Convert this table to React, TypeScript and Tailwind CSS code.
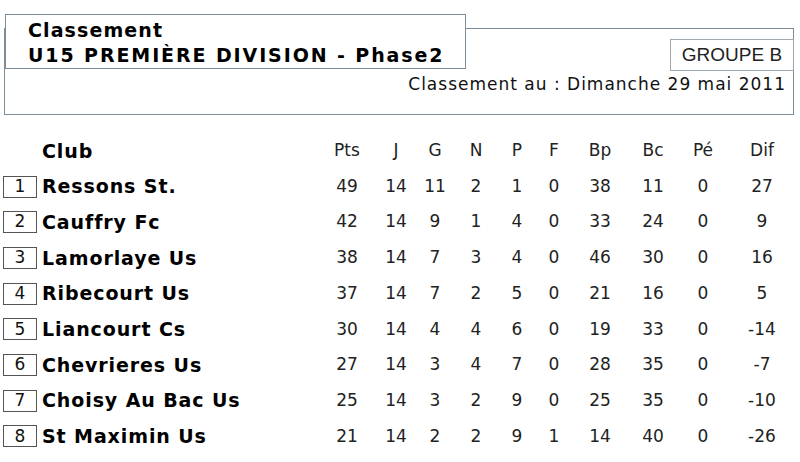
import React from "react";

const rows: [number, string, (string | number)[]][] = [
  [1, "Ressons St.", [49, 14, 11, 2, 1, 0, 38, 11, 0, 27]],
  [2, "Cauffry Fc", [42, 14, 9, 1, 4, 0, 33, 24, 0, 9]],
  [3, "Lamorlaye Us", [38, 14, 7, 3, 4, 0, 46, 30, 0, 16]],
  [4, "Ribecourt Us", [37, 14, 7, 2, 5, 0, 21, 16, 0, 5]],
  [5, "Liancourt Cs", [30, 14, 4, 4, 6, 0, 19, 33, 0, -14]],
  [6, "Chevrieres Us", [27, 14, 3, 4, 7, 0, 28, 35, 0, -7]],
  [7, "Choisy Au Bac Us", [25, 14, 3, 2, 9, 0, 25, 35, 0, -10]],
  [8, "St Maximin Us", [21, 14, 2, 2, 9, 1, 14, 40, 0, -26]],
];

const heads = ["Pts", "J", "G", "N", "P", "F", "Bp", "Bc", "Pé", "Dif"];

const grid =
  "grid grid-cols-[322px_50px_48px_30px_52px_30px_44px_48px_58px_42px_76px] h-[35.7px] items-center";

export default function App() {
  return (
    <div
      className="w-[800px] h-[462px] bg-white text-black overflow-hidden"
      style={{ fontFamily: '"DejaVu Sans", Verdana, sans-serif' }}
    >
      <div className="pt-[28px] pl-[4px] pr-[6px]">
        <div className="relative h-[87px] border border-[#7d8c99]">
          <div className="absolute left-[0px] top-[-15px] w-[461px] h-[55px] bg-white border border-[#7d8c99] pl-[22px] pt-[3px]">
            <div className="text-[19px] font-bold leading-[25px] tracking-[1.1px]">Classement</div>
            <div className="text-[19px] font-bold leading-[25px] tracking-[1.9px] whitespace-nowrap">
              U15 PREMIÈRE DIVISION - Phase2
            </div>
          </div>
          <div className="flex flex-col items-end pt-[10px]">
            <div
              className="w-[124px] h-[32px] border border-[#a0a8b0] flex items-center justify-center text-[19px] text-[#222] mr-[-1px]"
              style={{ fontFamily: '"Liberation Sans", Arial, sans-serif' }}
            >
              GROUPE B
            </div>
            <div className="text-[17px] leading-[26px] tracking-[1px] text-[#111] mr-[7px]">
              Classement au : Dimanche 29 mai 2011
            </div>
          </div>
        </div>
      </div>

      <div className="mt-[18px]">
        <div className={grid}>
          <div className="pl-[42px] text-[19px] font-bold tracking-[0.9px]">Club</div>
          {heads.map((h) => (
            <div key={h} className="text-center text-[17px] text-[#222]">
              {h}
            </div>
          ))}
        </div>
        {rows.map(([rank, name, vals]) => (
          <div key={rank} className={grid}>
            <div className="flex items-center">
              <div className="ml-[3px] w-[34px] h-[22px] border border-[#555] flex items-center justify-center text-[17px] text-[#111]">
                {rank}
              </div>
              <div className="ml-[5px] text-[19px] font-bold tracking-[0.9px] whitespace-nowrap">
                {name}
              </div>
            </div>
            {vals.map((v, i) => (
              <div key={i} className="text-center text-[17px] text-[#222]">
                {v}
              </div>
            ))}
          </div>
        ))}
      </div>
    </div>
  );
}
